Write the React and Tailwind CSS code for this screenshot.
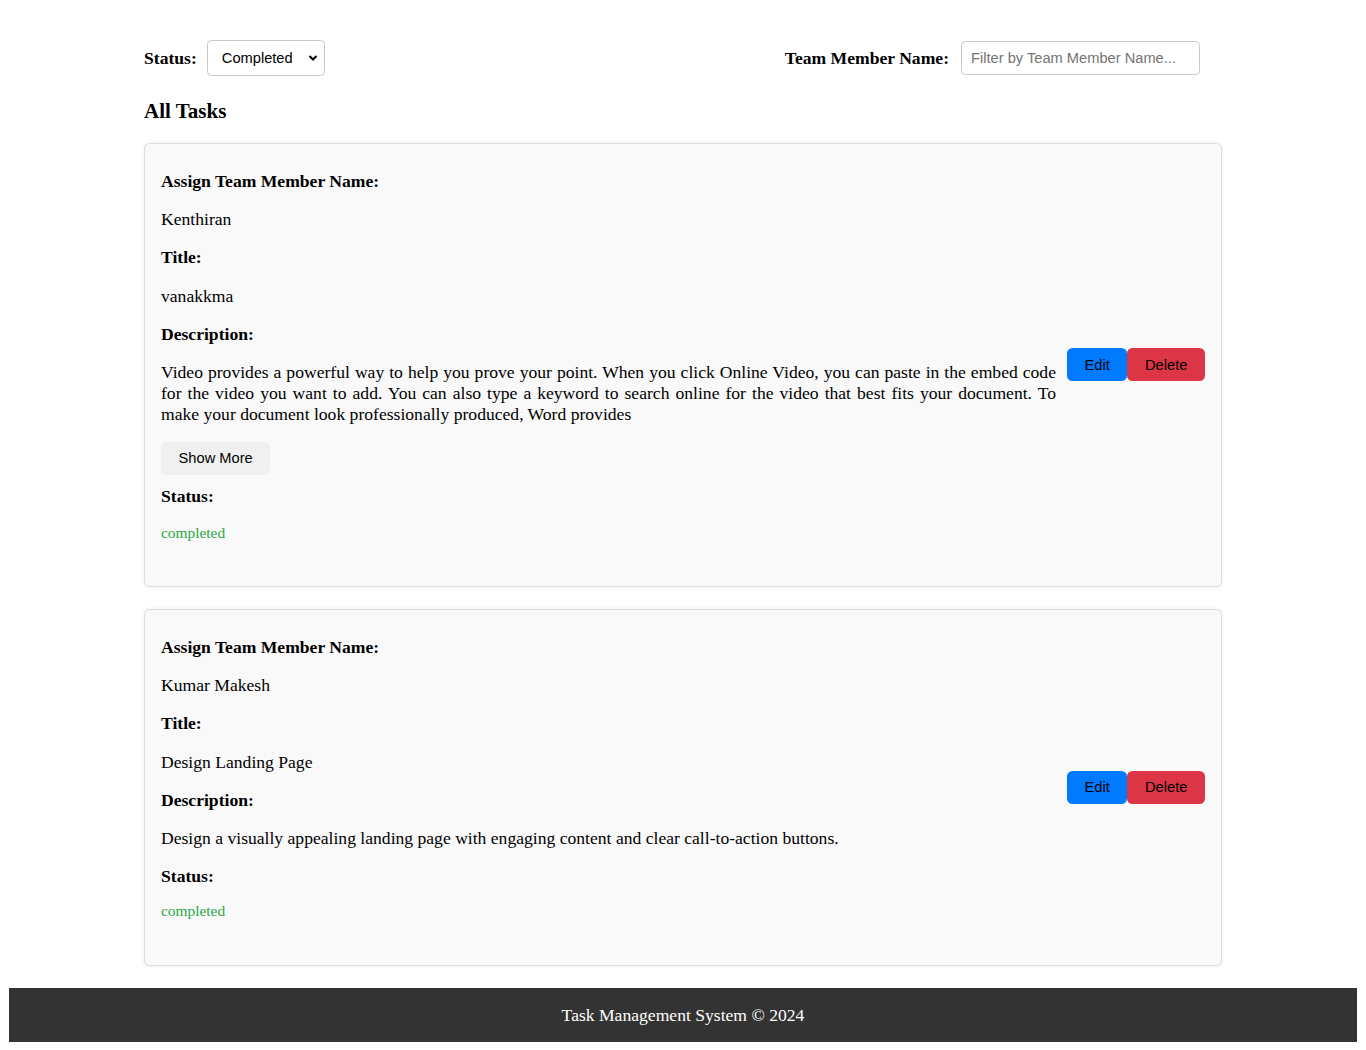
import { useState } from 'react';

const tasks = [
  {
    id: 1,
    member: 'Kenthiran',
    title: 'vanakkma',
    description:
      'Video provides a powerful way to help you prove your point. When you click Online Video, you can paste in the embed code for the video you want to add. You can also type a keyword to search online for the video that best fits your document. To make your document look professionally produced, Word provides',
    status: 'completed',
    long: true,
  },
  {
    id: 2,
    member: 'Kumar Makesh',
    title: 'Design Landing Page',
    description:
      'Design a visually appealing landing page with engaging content and clear call-to-action buttons.',
    status: 'completed',
    long: false,
  },
];

function TaskCard({ task }) {
  return (
    <div className="mb-[22px] flex items-center rounded-[5.5px] border border-[#dcdcdc] bg-[#f9f9f9] px-4 py-[9.4px] shadow-[0_0_4px_rgba(0,0,0,0.08)]">
      <div className={`mr-[11px] flex-1 ${task.long ? 'pb-[35px]' : 'pb-[36px]'}`}>
        <p className="my-[17.6px] text-[17.6px] font-bold leading-[20.65px]">Assign Team Member Name:</p>
        <p className="my-[17.6px] text-[17.6px] leading-[20.65px]">{task.member}</p>
        <p className="my-[17.6px] text-[17.6px] font-bold leading-[20.65px]">Title:</p>
        <p className="my-[17.6px] text-[17.6px] leading-[20.65px]">{task.title}</p>
        <p className="my-[17.6px] text-[17.6px] font-bold leading-[20.65px]">Description:</p>
        <p className="mt-[17.6px] text-justify text-[17.6px] leading-[21px]">{task.description}</p>
        {task.long && (
          <button className="mt-[16.6px] block h-[33px] rounded-[5.5px] bg-[#f0f0f0] px-[17.6px] font-['Liberation_Sans',Arial,sans-serif] text-[14.67px] text-black">
            Show More
          </button>
        )}
        <p
          className={`${task.long ? 'mt-[10.7px]' : 'mt-[16.6px]'} text-[17.6px] font-bold leading-[20.65px]`}
        >
          Status:
        </p>
        <p
          className={`${task.long ? 'mt-[17.6px]' : 'mt-[15.6px]'} text-[15.4px] leading-[17.7px] text-[#28a745]`}
        >
          {task.status}
        </p>
      </div>
      <div className="flex">
        <button className="h-[33px] rounded-[5.5px] bg-[#007bff] px-[17.6px] font-['Liberation_Sans',Arial,sans-serif] text-[14.67px] text-black">
          Edit
        </button>
        <button className="h-[33px] rounded-[5.5px] bg-[#dc3545] px-[17.6px] font-['Liberation_Sans',Arial,sans-serif] text-[14.67px] text-black">
          Delete
        </button>
      </div>
    </div>
  );
}

export default function App() {
  const [status, setStatus] = useState('completed');
  const [name, setName] = useState('');

  return (
    <div className="bg-white p-[8.8px] font-['Liberation_Serif','Times_New_Roman',serif] text-black">
      <div className="mx-auto w-[1078px]">
        {/* Filters */}
        <div className="mt-[31.2px] flex items-center justify-between">
          <div className="flex items-center">
            <label className="mr-[10.5px] text-[17.6px] font-bold leading-[20.65px]">Status:</label>
            <div className="relative">
              <select
                value={status}
                onChange={(e) => setStatus(e.target.value)}
                className="h-[36px] w-[118px] appearance-none rounded-[4.4px] border border-[#c8c8c8] bg-white pl-[13.5px] font-['Liberation_Sans',Arial,sans-serif] text-[14.67px] text-black"
              >
                <option value="all">All</option>
                <option value="pending">Pending</option>
                <option value="completed">Completed</option>
              </select>
              <svg
                className="pointer-events-none absolute right-[7px] top-[14px]"
                width="10"
                height="8"
                viewBox="0 0 10 8"
              >
                <polyline points="1.5,2 5,5.5 8.5,2" fill="none" stroke="#000" strokeWidth="2" />
              </svg>
            </div>
          </div>
          <div className="mr-[22px] flex items-center">
            <label className="mr-[12px] text-[17.6px] font-bold leading-[20.65px]">Team Member Name:</label>
            <input
              value={name}
              onChange={(e) => setName(e.target.value)}
              placeholder="Filter by Team Member Name..."
              className="h-[34px] w-[239px] rounded-[4.4px] border border-[#c8c8c8] bg-white px-[9px] font-['Liberation_Sans',Arial,sans-serif] text-[14.67px] text-black outline-none placeholder:text-[#757575]"
            />
          </div>
        </div>

        <h3 className="mt-[23px] mb-[20px] text-[21px] font-bold leading-[24px]">All Tasks</h3>

        {tasks.map((t) => (
          <TaskCard key={t.id} task={t} />
        ))}
      </div>

      {/* Footer */}
      <footer className="bg-[#333] py-[16.5px] text-center text-[17.6px] leading-[20.65px] text-white">
        Task Management System © 2024
      </footer>
    </div>
  );
}
